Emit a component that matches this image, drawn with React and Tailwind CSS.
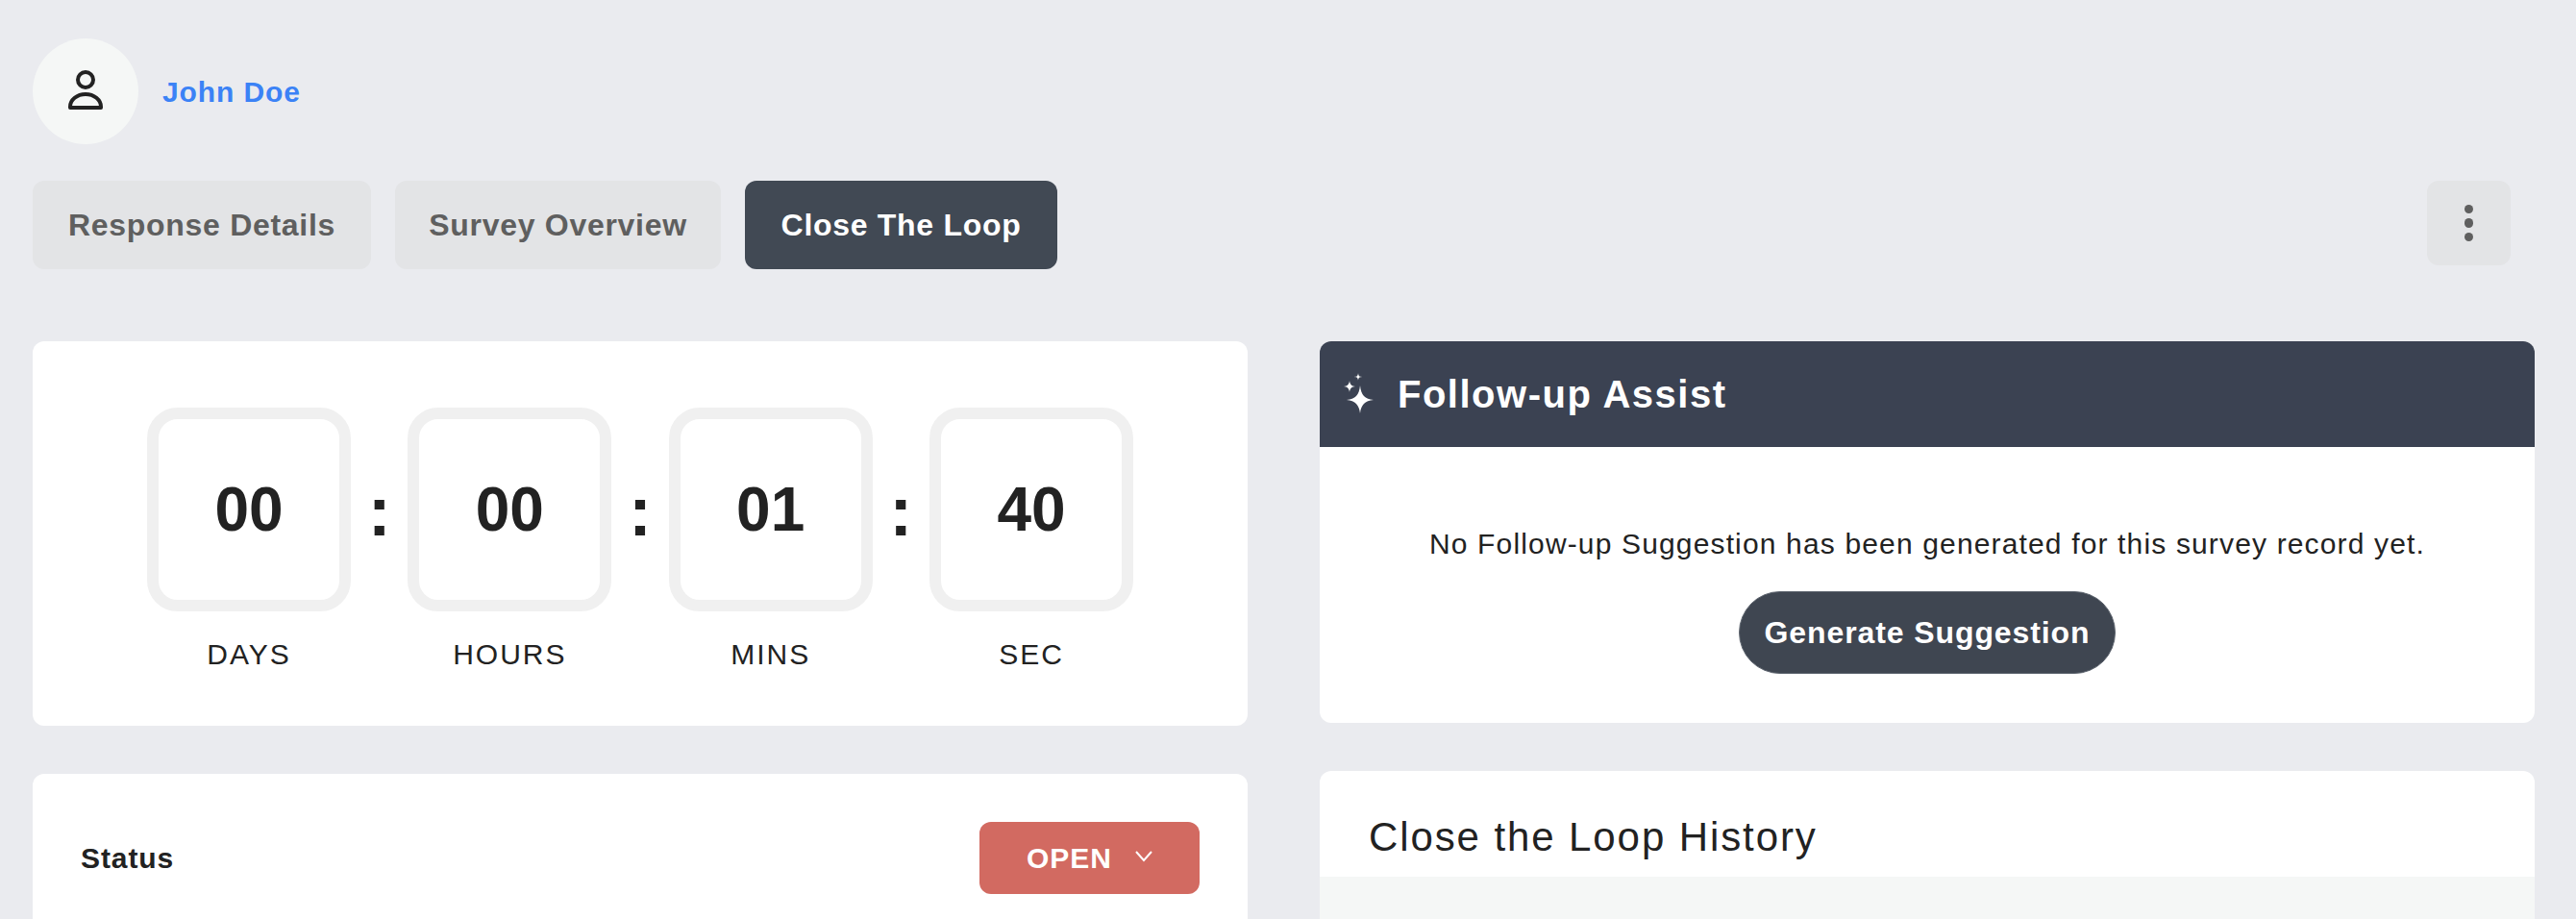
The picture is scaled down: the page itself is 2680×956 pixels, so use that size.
const tiempo = [
  { valor: '00', label: 'DAYS' },
  { valor: '00', label: 'HOURS' },
  { valor: '01', label: 'MINS' },
  { valor: '40', label: 'SEC' },
];

function Tab({ children, activo, className }) {
  return (
    <button
      className={`h-[92px] rounded-[12px] text-[32px] font-bold tracking-[0.7px] ${className} ${
        activo ? 'bg-[#414954] text-white' : 'bg-[#e3e4e6] text-[#5f5f5f]'
      }`}
    >
      {children}
    </button>
  );
}

export default function App() {
  return (
    <div className="h-[956px] overflow-hidden bg-[#eaebef] pt-[40px] pl-[34px] pr-[43px] font-['Liberation_Sans',Arial,sans-serif] text-[#222]">
      <div className="flex items-center gap-[25px]">
        <div className="flex h-[110px] w-[110px] items-center justify-center rounded-full bg-[#f5f7f6]">
          <svg width="36" height="41" viewBox="0 0 36 41" fill="none" stroke="#222" strokeWidth="4" className="mb-[3px]">
            <circle cx="18" cy="10" r="8" />
            <path d="M2 39v-1a16 13 0 0 1 32 0v1Z" strokeLinejoin="round" />
          </svg>
        </div>
        <span className="text-[30px] font-bold tracking-[0.9px] text-[#3b82f6]">John Doe</span>
      </div>

      <div className="mt-[38px] flex items-start gap-[25px]">
        <Tab className="w-[352px]">Response Details</Tab>
        <Tab className="w-[339px]">Survey Overview</Tab>
        <Tab activo className="w-[325px]">Close The Loop</Tab>
        <button className="ml-auto mr-[25px] flex h-[88px] w-[87px] flex-col items-center justify-center gap-[5px] rounded-[12px] bg-[#e3e4e6]">
          <span className="h-[9.5px] w-[9.5px] rounded-full bg-[#5f5f5f]" />
          <span className="h-[9.5px] w-[9.5px] rounded-full bg-[#5f5f5f]" />
          <span className="h-[9.5px] w-[9.5px] rounded-full bg-[#5f5f5f]" />
        </button>
      </div>

      <div className="mt-[75px] grid grid-cols-[1264px_1264px] gap-x-[75px]">
        <div className="flex flex-col gap-[50px]">
          <div className="flex h-[400px] justify-center rounded-[12px] bg-white pt-[69px]">
            {tiempo.map((t, i) => (
              <div key={t.label} className="flex">
                {i > 0 && (
                  <div className="flex h-[212px] w-[59.33px] items-center justify-center pt-[4px] text-[72px] leading-none font-bold">:</div>
                )}
                <div className="flex w-[212px] flex-col items-center">
                  <div className="flex h-[212px] w-[212px] items-center justify-center rounded-[32px] border-[12px] border-[#f0f0f0] text-[64px] font-bold">
                    {t.valor}
                  </div>
                  <span className="mt-[28px] text-[30px] leading-[34px] tracking-[2px]">{t.label}</span>
                </div>
              </div>
            ))}
          </div>

          <div className="h-[300px] rounded-[12px] bg-white pt-[50px] pr-[50px] pl-[50px]">
            <div className="flex items-center justify-between">
              <span className="text-[30px] font-bold tracking-[0.9px]">Status</span>
              <button className="flex h-[75px] w-[229px] items-center justify-center gap-[24px] rounded-[12px] bg-[#d26a61] text-[30px] font-bold tracking-[1px] text-white">
                OPEN
                <svg width="18" height="12" viewBox="0 0 18 12" fill="none" stroke="#fff" strokeWidth="2" className="mb-[4px]">
                  <path d="M1 1l8 9 8-9" />
                </svg>
              </button>
            </div>
          </div>
        </div>

        <div className="flex flex-col gap-[50px]">
          <div className="h-[397px] overflow-hidden rounded-[12px] bg-white">
            <div className="flex h-[110px] items-center gap-[21px] bg-[#3b4252] pl-[24px]">
              <svg width="36" height="44" viewBox="0 0 36 44" fill="#fff">
                <path d="M18 13C19 23 23 27 32 28C23 29 19 33 18 42C17 33 13 29 4 28C13 27 17 23 18 13Z" />
                <path d="M7 8C7.500 12 9 13.500 13 14C9 14.500 7.500 16 7 20C6.500 16 5 14.500 1 14C5 13.500 6.500 12 7 8Z" />
                <path d="M16 0C16.300 3 17 3.700 20 4C17 4.300 16.300 5 16 8C15.700 5 15 4.300 12 4C15 3.700 15.700 3 16 0Z" />
              </svg>
              <span className="text-[40px] font-bold tracking-[1.5px] text-white">Follow-up Assist</span>
            </div>
            <div className="flex flex-col items-center pt-[84px]">
              <p className="text-[30px] leading-[34px] tracking-[1.15px]">
                No Follow-up Suggestion has been generated for this survey record yet.
              </p>
              <button className="mt-[32px] h-[86px] w-[392px] rounded-full border border-[#5f6670] bg-[#3f4651] text-[32px] font-bold tracking-[0.9px] text-white">
                Generate Suggestion
              </button>
            </div>
          </div>

          <div className="h-[300px] overflow-hidden rounded-[12px] bg-white">
            <h2 className="flex h-[110px] items-center pl-[51px] pt-[26px] text-[42px] tracking-[1.9px]">Close the Loop History</h2>
            <div className="h-[200px] bg-[#f5f7f6]" />
          </div>
        </div>
      </div>
    </div>
  );
}
